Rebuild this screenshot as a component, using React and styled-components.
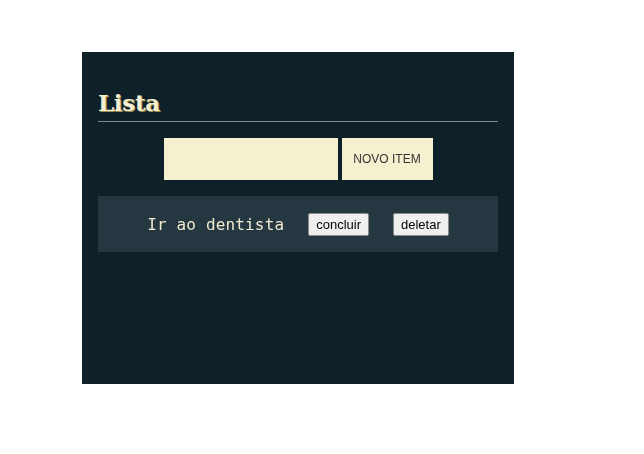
import React, { useState } from 'react'
import styled, { createGlobalStyle } from 'styled-components'

const GlobalStyle = createGlobalStyle`
  body {
    margin: 8px;
    background: #ffffff;
  }
`

const Container = styled.main`
  width: 432px;
  height: 332px;
  margin: 44px 0 0 74px;
  padding: 32px 16px 0;
  box-sizing: border-box;
  background-color: #0e2129;
`

const Title = styled.h1`
  margin: 0;
  padding: 2px 0 1px;
  border-bottom: 1px solid #7d8c87;
  font-family: 'DejaVu Serif', serif;
  font-weight: bold;
  font-size: 23px;
  line-height: 34px;
  letter-spacing: -0.3px;
  color: #f5eed0;
  text-shadow: 1px 1px 0 #a08f54;
`

const Form = styled.form`
  display: flex;
  justify-content: center;
  gap: 4px;
  margin-top: 16px;
`

const Input = styled.input`
  width: 174px;
  height: 42px;
  box-sizing: border-box;
  padding: 0 13px;
  border: none;
  outline: none;
  background-color: #f5f0d0;
  font-family: 'Liberation Sans', Arial, sans-serif;
  font-size: 13px;
  color: #222;
  caret-color: #000;
`

const AddButton = styled.button`
  width: 91px;
  height: 42px;
  border: none;
  background-color: #f5f0d0;
  font-family: 'Liberation Sans', Arial, sans-serif;
  font-size: 12px;
  color: #333;
  cursor: pointer;
`

const List = styled.ul`
  list-style: none;
  margin: 16px 0 0;
  padding: 0;
`

const Item = styled.li`
  display: flex;
  align-items: center;
  justify-content: center;
  gap: 24px;
  height: 56px;
  background-color: #253740;
`

const ItemText = styled.span`
  font-family: 'DejaVu Sans Mono', 'Liberation Mono', monospace;
  font-size: 16px;
  letter-spacing: 0.15px;
  color: #f0ead0;
`

const SmallButton = styled.button`
  height: 23px;
  padding: 0 7px;
  border: 1px solid #8a8a8a;
  border-radius: 2px;
  background-color: #efefef;
  font-family: 'Liberation Sans', Arial, sans-serif;
  font-size: 13px;
  color: #000;
  cursor: pointer;
`

export default function App() {
  const [items, setItems] = useState(['Ir ao dentista'])
  const [text, setText] = useState('')

  function handleSubmit(e) {
    e.preventDefault()
    if (!text.trim()) return
    setItems([...items, text])
    setText('')
  }

  return (
    <>
      <GlobalStyle />
      <Container>
        <Title>Lista</Title>
        <Form onSubmit={handleSubmit}>
          <Input autoFocus value={text} onChange={e => setText(e.target.value)} />
          <AddButton type="submit">NOVO ITEM</AddButton>
        </Form>
        <List>
          {items.map((item, index) => (
            <Item key={index}>
              <ItemText>{item}</ItemText>
              <SmallButton>concluir</SmallButton>
              <SmallButton onClick={() => setItems(items.filter((_, i) => i !== index))}>deletar</SmallButton>
            </Item>
          ))}
        </List>
      </Container>
    </>
  )
}
